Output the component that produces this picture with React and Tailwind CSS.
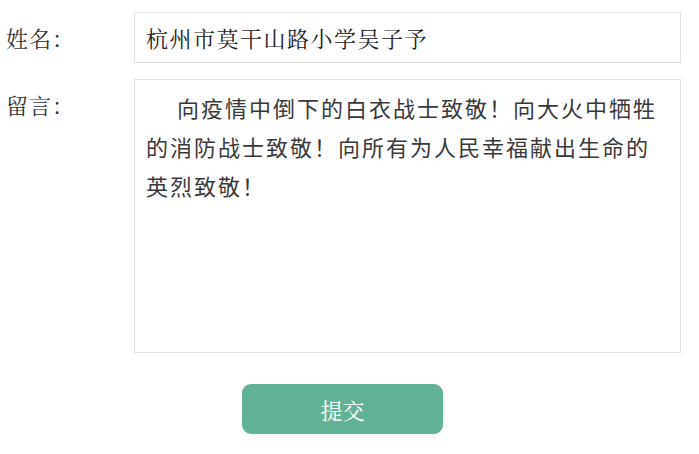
import { useState } from 'react';

export default function App() {
  const [name, setName] = useState('杭州市莫干山路小学吴子予');
  const [message, setMessage] = useState(
    '向疫情中倒下的白衣战士致敬！向大火中牺牲的消防战士致敬！向所有为人民幸福献出生命的英烈致敬！'
  );

  const serif = "font-['Noto_Serif_CJK_SC','Liberation_Serif','Noto_Sans_CJK_SC',serif]";
  const sans = "font-['Noto_Sans_CJK_SC','Liberation_Sans',sans-serif]";

  return (
    <div className="w-[699px] h-[454px] bg-white pt-[12px] text-[#333]">
      {/* Name */}
      <div className="flex items-center">
        <label className={`w-[134px] pl-[6px] text-[22px] leading-[30px] tracking-[1px] ${serif}`}>
          姓名：
        </label>
        <input
          type="text"
          value={name}
          onChange={(e) => setName(e.target.value)}
          className={`w-[547px] h-[51px] px-[11px] border border-[#e3e3e3] text-[22px] tracking-[1.5px] text-[#222] outline-none ${serif}`}
        />
      </div>

      {/* Message */}
      <div className="flex items-start mt-[16px]">
        <label className={`w-[134px] pl-[6px] pt-[11px] text-[22px] leading-[30px] tracking-[1px] ${serif}`}>
          留言：
        </label>
        <textarea
          value={message}
          onChange={(e) => setMessage(e.target.value)}
          className={`w-[547px] h-[274px] pl-[11px] pr-[12px] pt-[8px] border border-[#e3e3e3] text-[22px] leading-[39px] tracking-[2px] indent-[31px] text-[#3a3a3a] resize-none outline-none ${sans}`}
        />
      </div>

      {/* Submit */}
      <div className="pl-[242px] mt-[31px]">
        <button
          type="button"
          className={`w-[201px] h-[50px] rounded-[9px] bg-[#61b295] text-white text-[22px] ${serif}`}
        >
          提交
        </button>
      </div>
    </div>
  );
}
